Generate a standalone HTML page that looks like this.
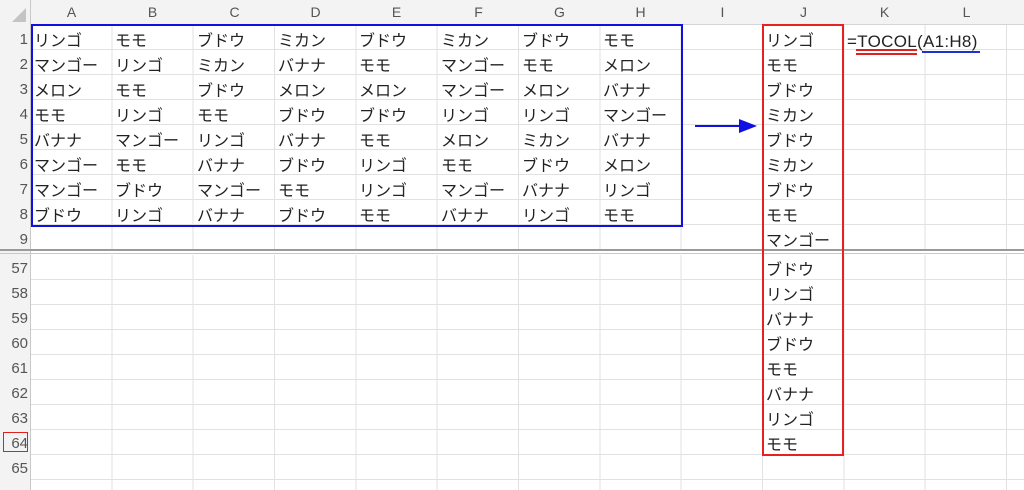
<!DOCTYPE html><html><head><meta charset="utf-8"><style>
body{margin:0;width:1024px;height:490px;overflow:hidden;background:#fff;position:relative;font-family:"Liberation Sans","Noto Sans CJK JP",sans-serif}
.a{position:absolute}
.hdr{background:#f3f3f3}
.ch{position:absolute;top:0;height:25px;line-height:25px;text-align:center;color:#555;font-size:14px;width:81px}
.rh{position:absolute;left:0;width:28px;height:25px;line-height:25px;text-align:right;color:#555;font-size:15px}
.t{position:absolute;height:25px;line-height:25px;font-size:16px;color:#222;white-space:nowrap;padding-left:3px;margin-top:2px}
.grid{position:absolute;left:31px;width:993px;
background-image:repeating-linear-gradient(90deg,transparent 0,transparent 80.33px,#e1e1e1 80.33px,#e1e1e1 81.33px),repeating-linear-gradient(180deg,transparent 0,transparent 24px,#e1e1e1 24px,#e1e1e1 25px)}
</style></head><body>
<div class="a hdr" style="left:0;top:0;width:1024px;height:25px;border-bottom:1px solid #d4d4d4;box-sizing:border-box"></div>
<div class="a hdr" style="left:0;top:0;width:31px;height:490px;border-right:1px solid #c8c8c8;box-sizing:border-box"></div>
<div class="a" style="left:12px;top:8px;width:0;height:0;border-left:14px solid transparent;border-bottom:14px solid #c4c4c4"></div>
<div class="grid" style="top:25px;height:225px"></div>
<div class="grid" style="top:255px;height:235px"></div>
<div class="a" style="left:0;top:249px;width:1024px;height:2px;background:#9a9a9a"></div>
<div class="a" style="left:0;top:253px;width:1024px;height:1px;background:#c8c8c8"></div>
<div class="ch" style="left:31px">A</div><div class="ch" style="left:112px">B</div><div class="ch" style="left:194px">C</div><div class="ch" style="left:275px">D</div><div class="ch" style="left:356px">E</div><div class="ch" style="left:438px">F</div><div class="ch" style="left:519px">G</div><div class="ch" style="left:600px">H</div><div class="ch" style="left:682px">I</div><div class="ch" style="left:763px">J</div><div class="ch" style="left:844px">K</div><div class="ch" style="left:926px">L</div>
<div class="rh" style="top:27px">1</div><div class="rh" style="top:52px">2</div><div class="rh" style="top:77px">3</div><div class="rh" style="top:102px">4</div><div class="rh" style="top:127px">5</div><div class="rh" style="top:152px">6</div><div class="rh" style="top:177px">7</div><div class="rh" style="top:202px">8</div><div class="rh" style="top:227px">9</div>
<div class="rh" style="top:256px">57</div><div class="rh" style="top:281px">58</div><div class="rh" style="top:306px">59</div><div class="rh" style="top:331px">60</div><div class="rh" style="top:356px">61</div><div class="rh" style="top:381px">62</div><div class="rh" style="top:406px">63</div><div class="rh" style="top:431px">64</div><div class="rh" style="top:456px">65</div>
<div class="a" style="left:3px;top:432px;width:25px;height:20px;border:1.5px solid #e02020;box-sizing:border-box"></div>

<div class="t" style="left:31px;top:27px">リンゴ</div><div class="t" style="left:112px;top:27px">モモ</div><div class="t" style="left:194px;top:27px">ブドウ</div><div class="t" style="left:275px;top:27px">ミカン</div><div class="t" style="left:356px;top:27px">ブドウ</div><div class="t" style="left:438px;top:27px">ミカン</div><div class="t" style="left:519px;top:27px">ブドウ</div><div class="t" style="left:600px;top:27px">モモ</div>
<div class="t" style="left:31px;top:52px">マンゴー</div><div class="t" style="left:112px;top:52px">リンゴ</div><div class="t" style="left:194px;top:52px">ミカン</div><div class="t" style="left:275px;top:52px">バナナ</div><div class="t" style="left:356px;top:52px">モモ</div><div class="t" style="left:438px;top:52px">マンゴー</div><div class="t" style="left:519px;top:52px">モモ</div><div class="t" style="left:600px;top:52px">メロン</div>
<div class="t" style="left:31px;top:77px">メロン</div><div class="t" style="left:112px;top:77px">モモ</div><div class="t" style="left:194px;top:77px">ブドウ</div><div class="t" style="left:275px;top:77px">メロン</div><div class="t" style="left:356px;top:77px">メロン</div><div class="t" style="left:438px;top:77px">マンゴー</div><div class="t" style="left:519px;top:77px">メロン</div><div class="t" style="left:600px;top:77px">バナナ</div>
<div class="t" style="left:31px;top:102px">モモ</div><div class="t" style="left:112px;top:102px">リンゴ</div><div class="t" style="left:194px;top:102px">モモ</div><div class="t" style="left:275px;top:102px">ブドウ</div><div class="t" style="left:356px;top:102px">ブドウ</div><div class="t" style="left:438px;top:102px">リンゴ</div><div class="t" style="left:519px;top:102px">リンゴ</div><div class="t" style="left:600px;top:102px">マンゴー</div>
<div class="t" style="left:31px;top:127px">バナナ</div><div class="t" style="left:112px;top:127px">マンゴー</div><div class="t" style="left:194px;top:127px">リンゴ</div><div class="t" style="left:275px;top:127px">バナナ</div><div class="t" style="left:356px;top:127px">モモ</div><div class="t" style="left:438px;top:127px">メロン</div><div class="t" style="left:519px;top:127px">ミカン</div><div class="t" style="left:600px;top:127px">バナナ</div>
<div class="t" style="left:31px;top:152px">マンゴー</div><div class="t" style="left:112px;top:152px">モモ</div><div class="t" style="left:194px;top:152px">バナナ</div><div class="t" style="left:275px;top:152px">ブドウ</div><div class="t" style="left:356px;top:152px">リンゴ</div><div class="t" style="left:438px;top:152px">モモ</div><div class="t" style="left:519px;top:152px">ブドウ</div><div class="t" style="left:600px;top:152px">メロン</div>
<div class="t" style="left:31px;top:177px">マンゴー</div><div class="t" style="left:112px;top:177px">ブドウ</div><div class="t" style="left:194px;top:177px">マンゴー</div><div class="t" style="left:275px;top:177px">モモ</div><div class="t" style="left:356px;top:177px">リンゴ</div><div class="t" style="left:438px;top:177px">マンゴー</div><div class="t" style="left:519px;top:177px">バナナ</div><div class="t" style="left:600px;top:177px">リンゴ</div>
<div class="t" style="left:31px;top:202px">ブドウ</div><div class="t" style="left:112px;top:202px">リンゴ</div><div class="t" style="left:194px;top:202px">バナナ</div><div class="t" style="left:275px;top:202px">ブドウ</div><div class="t" style="left:356px;top:202px">モモ</div><div class="t" style="left:438px;top:202px">バナナ</div><div class="t" style="left:519px;top:202px">リンゴ</div><div class="t" style="left:600px;top:202px">モモ</div>

<div class="t" style="left:763px;top:27px">リンゴ</div><div class="t" style="left:763px;top:52px">モモ</div><div class="t" style="left:763px;top:77px">ブドウ</div><div class="t" style="left:763px;top:102px">ミカン</div><div class="t" style="left:763px;top:127px">ブドウ</div><div class="t" style="left:763px;top:152px">ミカン</div><div class="t" style="left:763px;top:177px">ブドウ</div><div class="t" style="left:763px;top:202px">モモ</div><div class="t" style="left:763px;top:227px">マンゴー</div>
<div class="t" style="left:763px;top:256px">ブドウ</div><div class="t" style="left:763px;top:281px">リンゴ</div><div class="t" style="left:763px;top:306px">バナナ</div><div class="t" style="left:763px;top:331px">ブドウ</div><div class="t" style="left:763px;top:356px">モモ</div><div class="t" style="left:763px;top:381px">バナナ</div><div class="t" style="left:763px;top:406px">リンゴ</div><div class="t" style="left:763px;top:431px">モモ</div>

<div class="t" style="left:844px;top:27px;font-size:17px;letter-spacing:0.3px">=TOCOL(A1:H8)</div>
<div class="a" style="left:856px;top:49px;width:61px;height:1.5px;background:#e02020"></div>
<div class="a" style="left:856px;top:53px;width:61px;height:1.5px;background:#e02020"></div>
<div class="a" style="left:922px;top:51px;width:58px;height:1.5px;background:#2030d0"></div>

<div class="a" style="left:31px;top:24px;width:652px;height:203px;border:2px solid #1010e0;box-sizing:border-box"></div>
<div class="a" style="left:762px;top:24px;width:82px;height:432px;border:2px solid #e82020;box-sizing:border-box"></div>
<div class="a" style="left:695px;top:125px;width:46px;height:2px;background:#1010e0"></div>
<div class="a" style="left:739px;top:119px;width:0;height:0;border-top:7px solid transparent;border-bottom:7px solid transparent;border-left:18px solid #1010e0"></div>
</body></html>
